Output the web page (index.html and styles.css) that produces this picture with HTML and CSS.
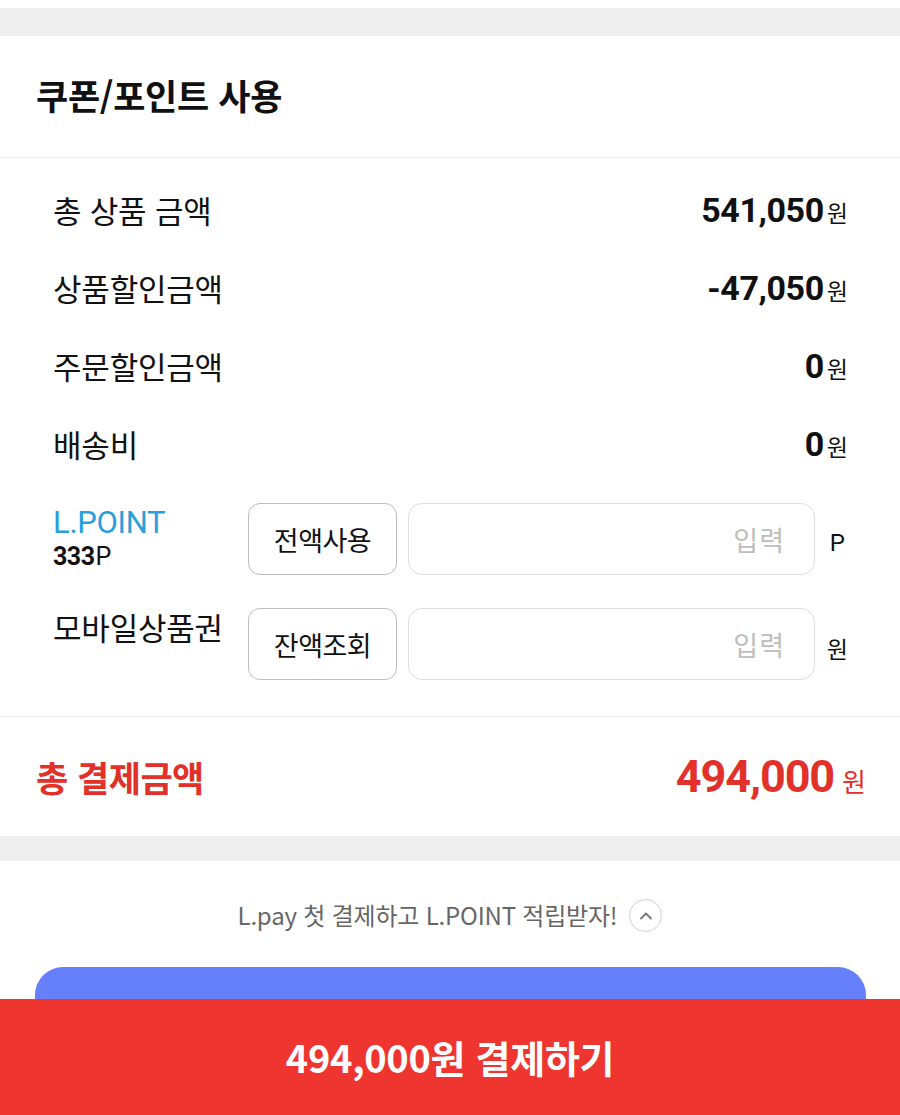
FILE: index.html
```html
<!DOCTYPE html>
<html lang="ko">
<head>
<meta charset="utf-8">
<link rel="stylesheet" href="styles.css">
</head>
<body>
<div class="band band-top"></div>
<section class="card">
  <header class="card-head">
    <h2 class="title">쿠폰/포인트 사용</h2>
  </header>
  <div class="summary">
    <div class="row"><span class="label">총 상품 금액</span><span class="value"><b class="num">541,050</b><span class="won">원</span></span></div>
    <div class="row"><span class="label">상품할인금액</span><span class="value"><b class="num">-47,050</b><span class="won">원</span></span></div>
    <div class="row"><span class="label">주문할인금액</span><span class="value"><b class="num">0</b><span class="won">원</span></span></div>
    <div class="row"><span class="label">배송비</span><span class="value"><b class="num">0</b><span class="won">원</span></span></div>

    <div class="input-row first">
      <div class="label-col">
        <div class="lpoint">L.POINT</div>
        <div class="points"><b>333</b>P</div>
      </div>
      <button class="btn">전액사용</button>
      <div class="field"><span class="ph">입력</span></div>
      <span class="unit unit-p">P</span>
    </div>
    <div class="input-row">
      <div class="label-col"><div class="label">모바일상품권</div></div>
      <button class="btn">잔액조회</button>
      <div class="field"><span class="ph">입력</span></div>
      <span class="unit">원</span>
    </div>
  </div>
  <div class="total">
    <span class="total-label">총 결제금액</span>
    <span class="total-value"><b class="total-num">494,000</b><span class="total-won">원</span></span>
  </div>
</section>
<div class="band band-mid"></div>
<div class="promo">
  <span class="promo-text">L.pay 첫 결제하고 L.POINT 적립받자!</span>
  <span class="toggle">
    <svg width="18" height="18" viewBox="0 0 18 18"><path d="M4 11.5 L9 6.5 L14 11.5" fill="none" stroke="#777" stroke-width="1.8" stroke-linecap="round" stroke-linejoin="round"/></svg>
  </span>
</div>
<div class="lpay-btn"></div>
<div class="paybar">494,000원 결제하기</div>
</body>
</html>
```

FILE: styles.css
```css
* { box-sizing: border-box; }
html, body { margin: 0; padding: 0; }
body {
  background: #fff;
  font-family: "Noto Sans CJK KR", "Noto Sans", sans-serif;
  color: #111;
  width: 900px;
}
.band { background: #eeeeee; }
.band-top { margin-top: 8px; height: 28px; }
.band-mid { height: 25px; }

.card-head {
  height: 122px;
  border-bottom: 1px solid #eaeaea;
  display: flex;
  align-items: center;
  padding-left: 36px;
}
.title {
  margin: 0;
  font-size: 35px;
  font-weight: 700;
  letter-spacing: -0.3px;
  color: #111;
  padding-bottom: 4px;
}

.summary {
  padding: 13px 52px 36px 53px;
  border-bottom: 1px solid #eaeaea;
}
.row {
  height: 78px;
  display: flex;
  align-items: center;
  justify-content: space-between;
}
.label {
  font-size: 31px;
  font-weight: 400;
  color: #111;
  letter-spacing: -0.2px;
}
.row .label { margin-top: -2px; }
.value { display: flex; align-items: baseline; }
.num {
  font-family: Roboto, "Noto Sans", sans-serif;
  font-weight: 700;
  font-size: 34px;
  letter-spacing: -0.4px;
}
.won { font-size: 23px; margin-left: 3px; }

.input-row {
  display: grid;
  grid-template-columns: 195px 149px 418px 1fr;
  height: 72px;
  margin-top: 33px;
}
.input-row.first { margin-top: 20px; }
.label-col { display: flex; flex-direction: column; }
.lpoint {
  color: #2a9fd9;
  font-family: Roboto, "Noto Sans", sans-serif;
  font-size: 31px;
  line-height: 36px;
  letter-spacing: -0.3px;
  margin-top: 2px;
}
.points {
  font-family: Roboto, "Noto Sans", sans-serif;
  font-size: 25px;
  line-height: 26px;
  margin-top: 3px;
}
.points b { font-weight: 700; letter-spacing: -0.5px; margin-right: 1px; }
.input-row .label { margin-top: 0; line-height: 38px; }
.btn {
  width: 149px;
  height: 72px;
  border: 1.5px solid #bdbdbd;
  border-radius: 12px;
  background: #fff;
  font-family: "Noto Sans CJK KR", sans-serif;
  font-size: 27px;
  color: #111;
  padding: 0;
  letter-spacing: -0.5px;
}
.field {
  margin-left: 11px;
  height: 72px;
  border: 1.5px solid #dedede;
  border-radius: 14px;
  display: flex;
  align-items: center;
  justify-content: flex-end;
  padding-right: 29px;
}
.ph { font-size: 27px; color: #bdbdbd; letter-spacing: 1px; }
.unit {
  font-size: 23px;
  text-align: right;
  align-self: center;
  padding-top: 8px;
}
.unit-p { font-family: Roboto, sans-serif; font-size: 24px; padding-right: 3px; }

.total {
  height: 119px;
  display: flex;
  align-items: center;
  justify-content: space-between;
  padding: 0 34px 0 36px;
  color: #e2302a;
}
.total-label { font-size: 35px; font-weight: 700; letter-spacing: -0.5px; }
.total-value { display: flex; align-items: baseline; }
.total-num {
  font-family: Roboto, sans-serif;
  font-weight: 700;
  font-size: 45px;
  letter-spacing: -1.1px;
}
.total-won { font-size: 26px; margin-left: 8px; }

.promo {
  padding-top: 37px;
  height: 106px;
  display: flex;
  justify-content: center;
  align-items: flex-start;
  gap: 12px;
}
.promo-text {
  font-size: 24px;
  line-height: 34px;
  color: #666;
  letter-spacing: -0.2px;
}
.toggle {
  width: 33px;
  height: 33px;
  margin-top: 1px;
  border: 1.5px solid #cfcfcf;
  border-radius: 50%;
  display: flex;
  align-items: center;
  justify-content: center;
}
.lpay-btn {
  margin: 0 34px 0 35px;
  height: 90px;
  background: #6680fc;
  border-radius: 28px 28px 0 0;
}
.paybar {
  position: fixed;
  left: 0;
  right: 0;
  bottom: 0;
  height: 116px;
  background: #ef3530;
  color: #fff;
  font-size: 38px;
  font-weight: 700;
  display: flex;
  align-items: center;
  justify-content: center;
  letter-spacing: -0.3px;
  padding-bottom: 2px;
}
```
